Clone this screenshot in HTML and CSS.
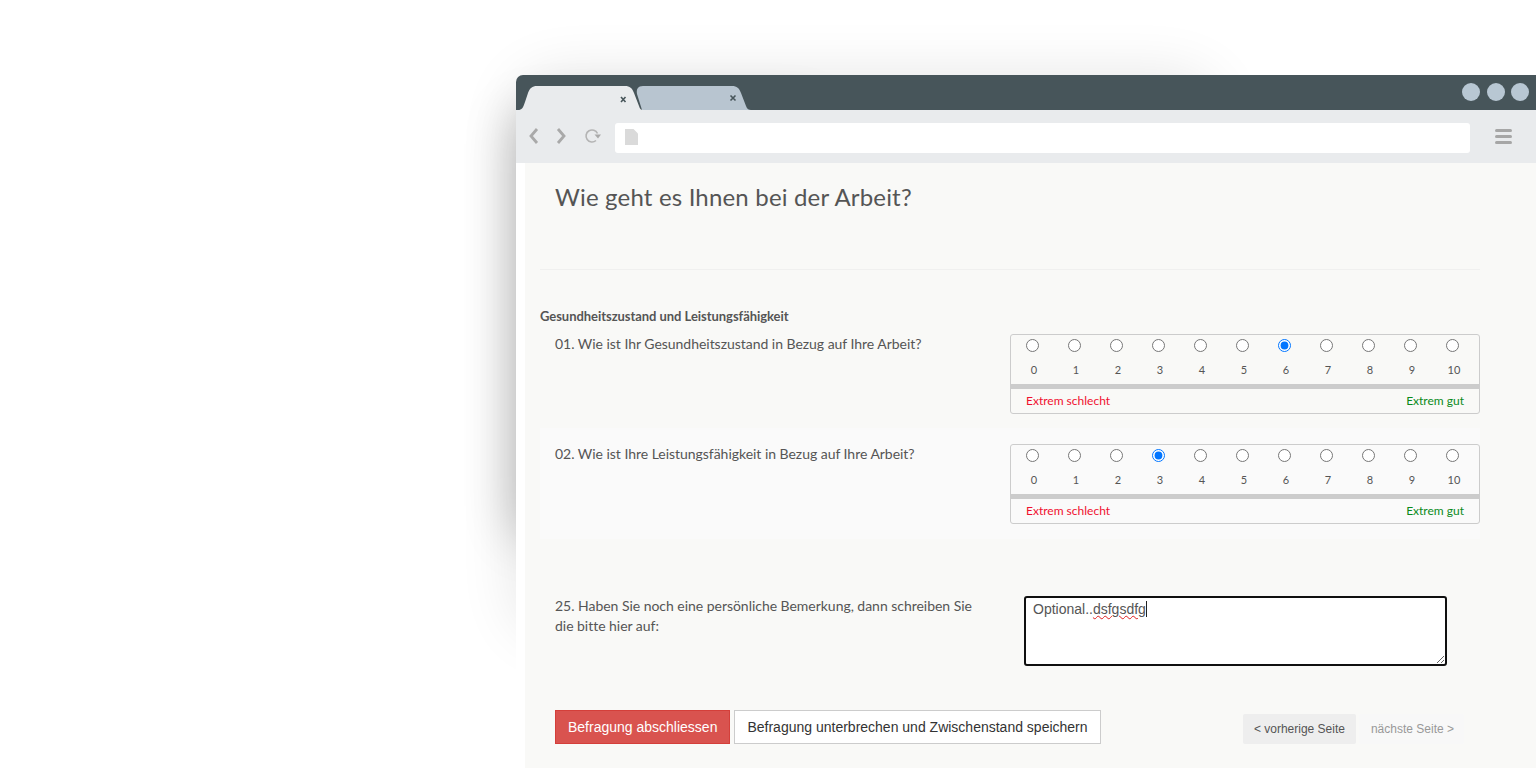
FILE: index.html
```html
<!DOCTYPE html>
<html lang="de">
<head>
    <meta charset="UTF-8">
    <title>Wie geht es Ihnen bei der Arbeit?</title>
    <link rel="stylesheet" href="styles.css">
</head>
<body>
    <div class="browser">
        <div class="tabbar">
            <svg class="tabs" width="240" height="35" viewBox="0 0 240 35">
                <path d="M126 35 L121 19 C120 14 122 11 127 11 L216 11 C221 11 223 13 225 18 L230 31 C231 34 233 35 235 35 Z" fill="#b8c5d0"/>
                <path d="M2 35 C6 35 7 33 9 27 L12 18 C14 13 16 11 21 11 L109 11 C114 11 116 13 118 18 L123 31 C124 34 125 35 127 35 Z" fill="#e9ebed"/>
                <path d="M105 22 L109.500 27 M109.500 22 L105 27" stroke="#47555a" stroke-width="1.600" fill="none"/>
                <path d="M214.500 20.500 L219.500 25.500 M219.500 20.500 L214.500 25.500" stroke="#47555a" stroke-width="1.600" fill="none"/>
            </svg>
            <div class="dots">
                <span class="dot"></span>
                <span class="dot"></span>
                <span class="dot"></span>
            </div>
        </div>
        <div class="toolbar">
            <svg class="nav" width="82" height="24" viewBox="0 0 82 24">
                <path d="M12 5 L6 12 L12 19" fill="none" stroke="#a9a9a9" stroke-width="2.800"/>
                <path d="M33 5 L39 12 L33 19" fill="none" stroke="#a9a9a9" stroke-width="2.800"/>
                <path d="M71 16.500 A6 6 0 1 1 72.500 9.500" fill="none" stroke="#b4b4b4" stroke-width="1.600"/>
                <path d="M69.500 10.500 L76 10.500 L73 14.500 Z" fill="#a9a9a9"/>
            </svg>
            <div class="address">
                <svg width="13" height="16" viewBox="0 0 13 16"><path d="M0 0 L8.500 0 L13 4.500 L13 16 L0 16 Z" fill="#dadada"/></svg>
            </div>
            <div class="menu">
                <span></span>
                <span></span>
                <span></span>
            </div>
        </div>
        <div class="page">
            <div class="content">
                <div class="head">
                    <h1>Wie geht es Ihnen bei der Arbeit?</h1>
                </div>
                <h2>Gesundheitszustand und Leistungsfähigkeit</h2>

                <div class="row">
                    <div class="question">01. Wie ist Ihr Gesundheitszustand in Bezug auf Ihre Arbeit?</div>
                    <div class="scale">
                        <div class="points">
                            <label><input type="radio" name="q1"><span>0</span></label>
                            <label><input type="radio" name="q1"><span>1</span></label>
                            <label><input type="radio" name="q1"><span>2</span></label>
                            <label><input type="radio" name="q1"><span>3</span></label>
                            <label><input type="radio" name="q1"><span>4</span></label>
                            <label><input type="radio" name="q1"><span>5</span></label>
                            <label><input type="radio" name="q1" checked><span>6</span></label>
                            <label><input type="radio" name="q1"><span>7</span></label>
                            <label><input type="radio" name="q1"><span>8</span></label>
                            <label><input type="radio" name="q1"><span>9</span></label>
                            <label><input type="radio" name="q1"><span>10</span></label>
                        </div>
                        <div class="legend"><span class="bad">Extrem schlecht</span><span class="good">Extrem gut</span></div>
                    </div>
                </div>

                <div class="row alt">
                    <div class="question">02. Wie ist Ihre Leistungsfähigkeit in Bezug auf Ihre Arbeit?</div>
                    <div class="scale">
                        <div class="points">
                            <label><input type="radio" name="q2"><span>0</span></label>
                            <label><input type="radio" name="q2"><span>1</span></label>
                            <label><input type="radio" name="q2"><span>2</span></label>
                            <label><input type="radio" name="q2" checked><span>3</span></label>
                            <label><input type="radio" name="q2"><span>4</span></label>
                            <label><input type="radio" name="q2"><span>5</span></label>
                            <label><input type="radio" name="q2"><span>6</span></label>
                            <label><input type="radio" name="q2"><span>7</span></label>
                            <label><input type="radio" name="q2"><span>8</span></label>
                            <label><input type="radio" name="q2"><span>9</span></label>
                            <label><input type="radio" name="q2"><span>10</span></label>
                        </div>
                        <div class="legend"><span class="bad">Extrem schlecht</span><span class="good">Extrem gut</span></div>
                    </div>
                </div>

                <div class="remark">
                    <div class="question">25. Haben Sie noch eine persönliche Bemerkung, dann schreiben Sie die bitte hier auf:</div>
                    <div class="field">Optional..<span class="typo">dsfgsdfg</span><span class="caret"></span></div>
                </div>

                <div class="actions">
                    <a class="btn btn-red">Befragung abschliessen</a>
                    <a class="btn">Befragung unterbrechen und Zwischenstand speichern</a>
                    <div class="pager">
                        <a class="prev">&lt; vorherige Seite</a>
                        <a class="next">nächste Seite &gt;</a>
                    </div>
                </div>
            </div>
        </div>
    </div>
</body>
</html>
```

FILE: styles.css
```css
* {
    box-sizing: border-box;
}
html, body {
    height: 768px;
    overflow: hidden;
}
body {
    margin: 0;
    padding: 75px 0 0 516px;
    background: #fff;
    font-family: Lato, "Liberation Sans", sans-serif;
    color: #555;
}
.browser {
    position: relative;
    height: 693px;
    display: flex;
    flex-direction: column;
}
/* faint shadow all along the window, a darker one down the left side */
.browser::before {
    content: "";
    position: absolute;
    z-index: -1;
    top: 0;
    left: 0;
    width: 700px;
    height: 560px;
    border-radius: 40px;
    background: #000;
    opacity: .1;
    filter: blur(30px);
}
.browser::after {
    content: "";
    position: absolute;
    z-index: -1;
    top: 40px;
    left: 0;
    width: 300px;
    height: 420px;
    background: #000;
    opacity: .27;
    filter: blur(26px);
}
.tabbar {
    height: 35px;
    display: flex;
    justify-content: space-between;
    background: #47555a;
    border-top-left-radius: 7px;
}
.tabs {
    display: block;
}
.dots {
    display: flex;
    gap: 6.5px;
    padding: 8px 7px 0 0;
}
.dot {
    width: 18px;
    height: 18px;
    border-radius: 50%;
    background: #b8c7d3;
}
.toolbar {
    height: 53px;
    display: flex;
    align-items: center;
    background: #e9ebed;
}
.nav {
    margin: -1px 0 0 9px;
    flex: none;
}
.address {
    width: 855px;
    height: 30px;
    margin: 2px 0 0 8px;
    padding: 6px 0 0 10px;
    background: #fff;
    border-radius: 3px;
}
.menu {
    margin-left: 25px;
    width: 17px;
    display: flex;
    flex-direction: column;
    gap: 3px;
}
.menu span {
    height: 3px;
    border-radius: 2px;
    background: #a6a6a6;
}
.page {
    flex: 1;
    padding-left: 9px;
    background: #fff;
}
.content {
    height: 100%;
    padding: 0 56px 0 15px;
    background: #f9f9f7;
}
.head {
    height: 107px;
    padding: 20px 15px 0;
    border-bottom: 1px solid #f0f0ef;
}
h1 {
    margin: 0;
    font-size: 24px;
    line-height: 28px;
    font-weight: 400;
    letter-spacing: .18px;
}
h2 {
    margin: 38px 0 0;
    font-size: 13px;
    line-height: 16px;
    font-weight: 700;
    letter-spacing: -.05px;
}
.row {
    display: grid;
    grid-template-columns: 1fr 470px;
    padding: 10px 0 14px;
}
.alt {
    padding: 16px 0 15px;
    background: #fafafa;
}
.question {
    padding-left: 15px;
    font-size: 14px;
    line-height: 20px;
    letter-spacing: -.03px;
}
.scale {
    height: 80px;
    border: 1px solid #ccc;
    border-radius: 3px;
}
.points {
    display: grid;
    grid-template-columns: repeat(11, 42px);
    padding-top: 4px;
    height: 54px;
    border-bottom: 5px solid #ccc;
}
.points label {
    display: flex;
    flex-direction: column;
    align-items: center;
}
.points input {
    margin: 0;
    width: 13px;
    height: 13px;
}
.points span {
    margin: 10px 0 0 4px;
    font-size: 11px;
    line-height: 16px;
}
.legend {
    display: flex;
    justify-content: space-between;
    padding: 0 15px;
    font-size: 12px;
    line-height: 24px;
}
.bad {
    color: #f0102f;
}
.good {
    color: #0a8a1a;
}
.remark {
    display: grid;
    grid-template-columns: 455px 423px;
    column-gap: 29px;
    margin-top: 57px;
}
.remark .question {
    padding-right: 15px;
}
.field {
    height: 70px;
    padding: 2px 7px;
    border: 2px solid #101010;
    border-radius: 3px;
    background: #fff;
    font-family: "Liberation Sans", Arial, sans-serif;
    font-size: 14px;
    line-height: 18px;
    color: #555;
    overflow: auto;
    resize: both;
}
.typo {
    text-decoration: underline wavy #e02020 1px;
    text-underline-offset: 1px;
}
.caret {
    display: inline-block;
    width: 1px;
    height: 16px;
    vertical-align: -3px;
    background: #222;
}
.actions {
    display: flex;
    align-items: flex-end;
    gap: 4px;
    margin-top: 44px;
    padding: 0 16px 0 15px;
    font-family: "Liberation Sans", Arial, sans-serif;
}
.btn {
    height: 34px;
    padding: 0 12px;
    border: 1px solid #ccc;
    background: #fff;
    font-size: 14px;
    line-height: 32px;
    color: #333;
}
.btn-red {
    background: #d9534f;
    border-color: #d43f3a;
    color: #fff;
}
.pager {
    display: flex;
    gap: 3px;
    margin-left: auto;
    font-size: 12px;
    line-height: 30px;
}
.pager a {
    height: 30px;
    border-radius: 2px;
}
.prev {
    padding: 0 11px;
    background: #eee;
    color: #555;
}
.next {
    padding: 0 10px 0 12px;
    background: #f8f8f8;
    color: #999;
}
```
